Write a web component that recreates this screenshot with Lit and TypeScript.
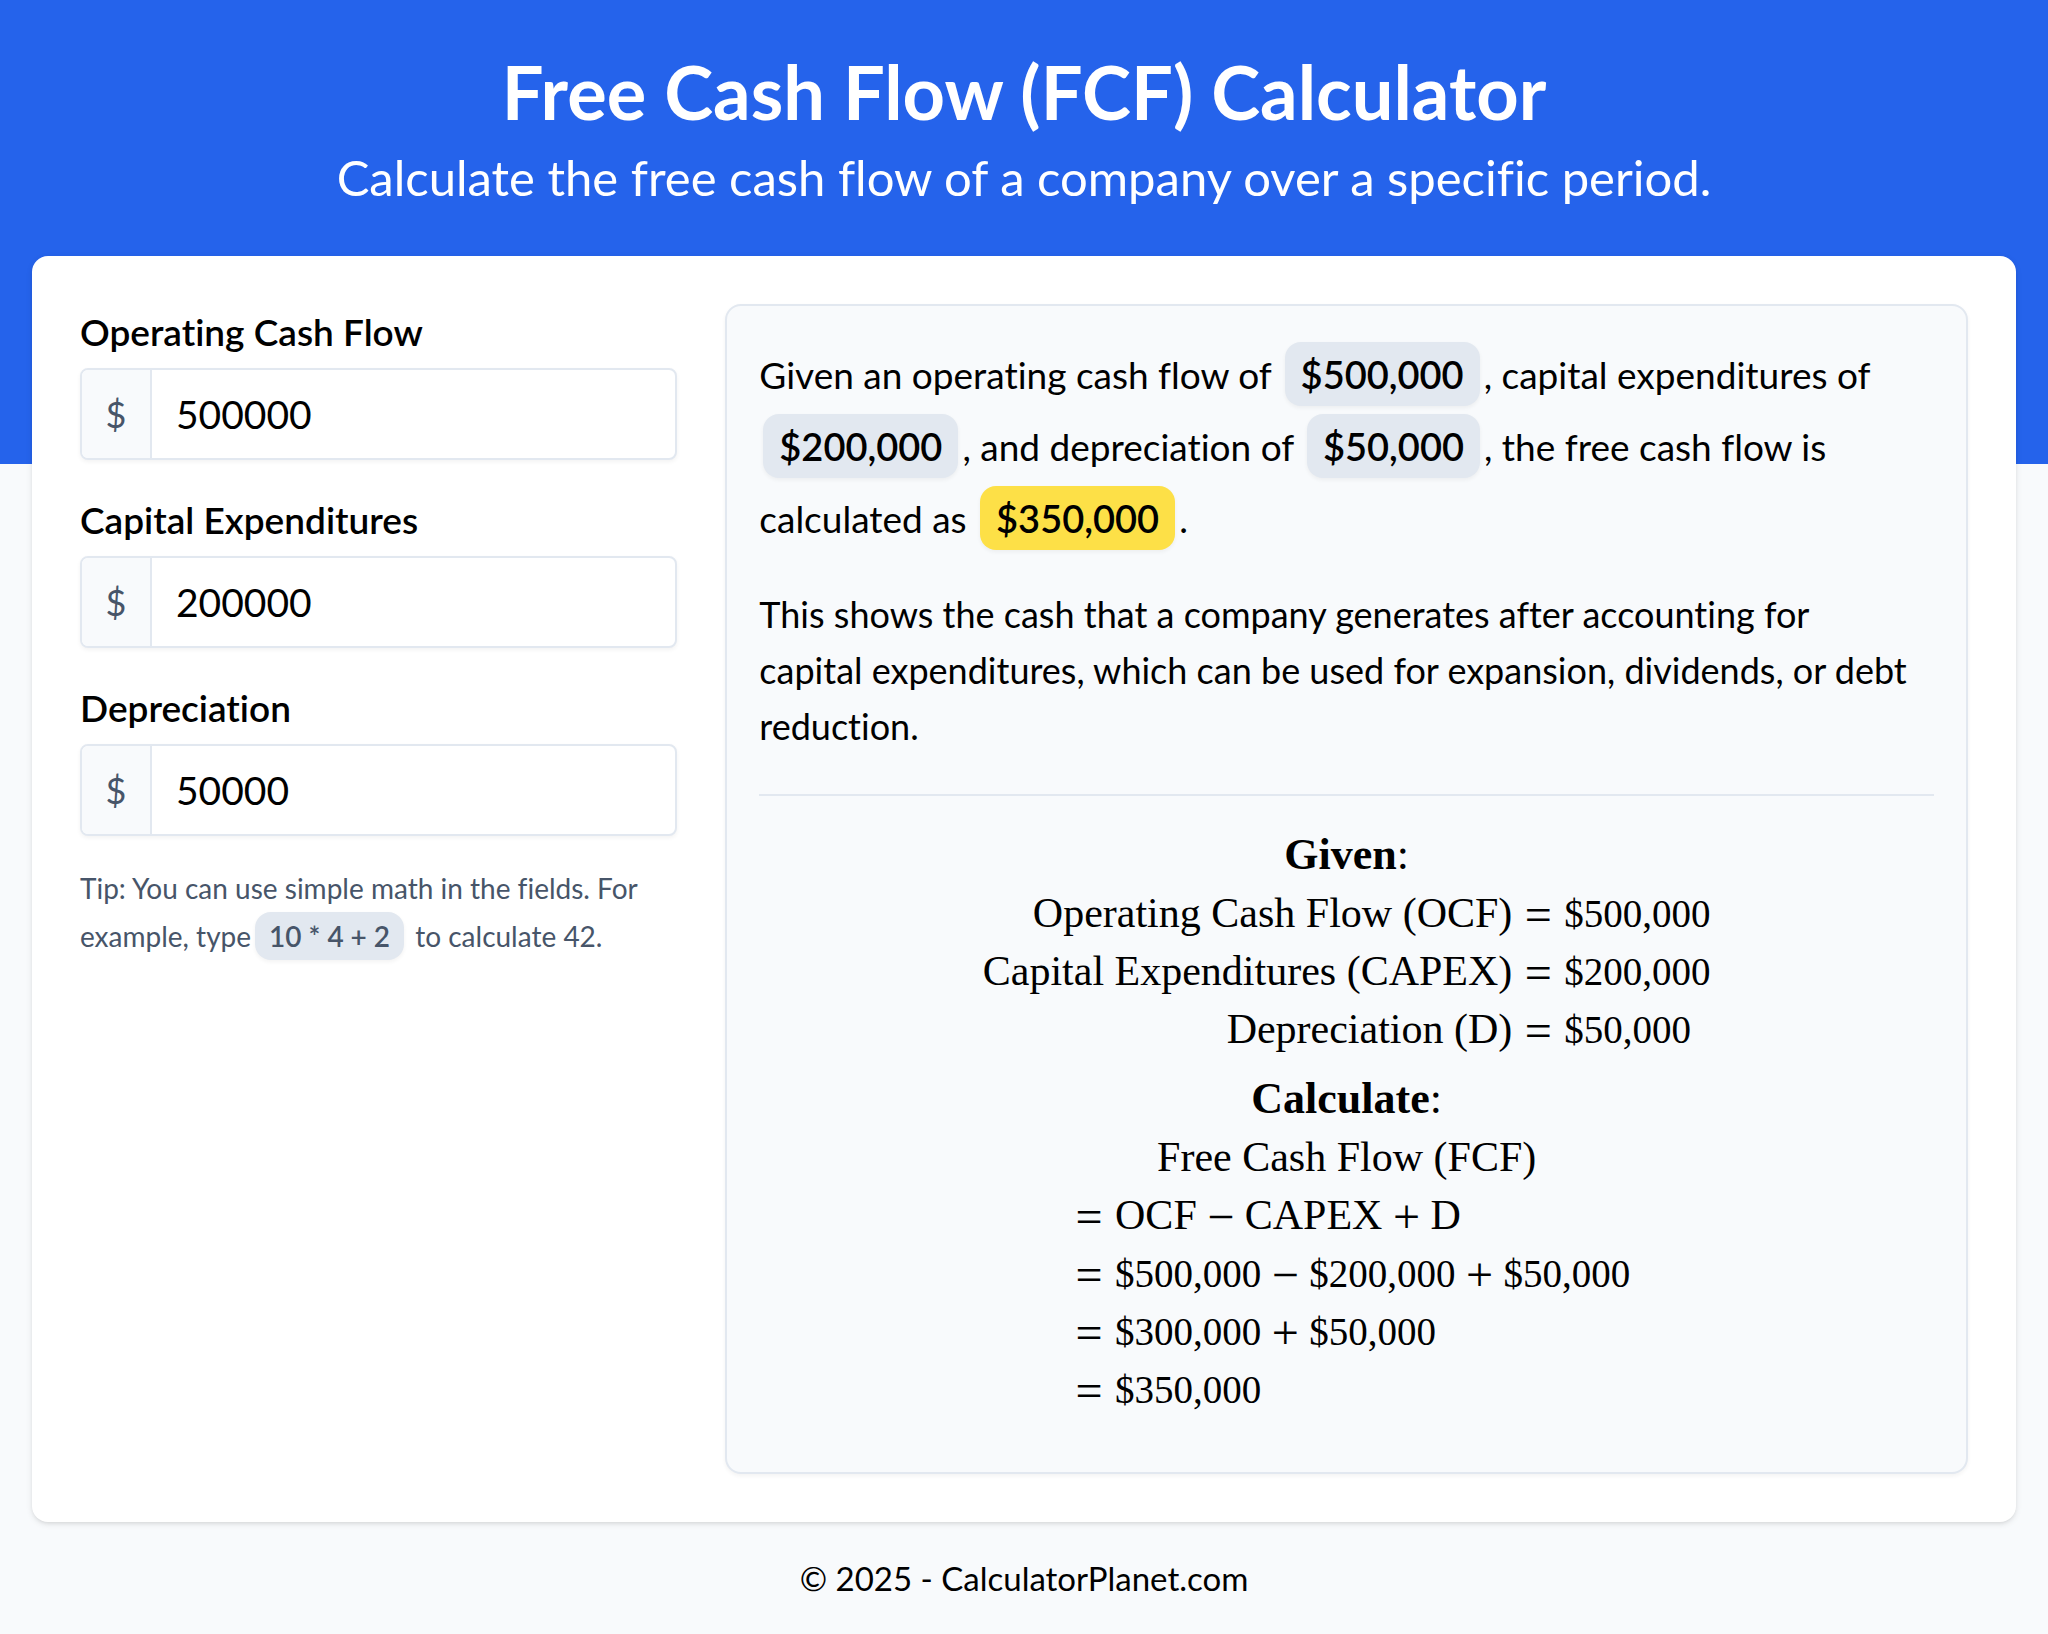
import { LitElement, html, css } from "lit";
import { customElement, state } from "lit/decorators.js";

type FieldKey = "ocf" | "capex" | "dep";

const FIELDS: { key: FieldKey; label: string }[] = [
  { key: "ocf", label: "Operating Cash Flow" },
  { key: "capex", label: "Capital Expenditures" },
  { key: "dep", label: "Depreciation" },
];

/** Evaluates a plain arithmetic expression with + - * / and parentheses. */
function evaluate(source: string): number {
  const tokens = source.replace(/[,$\s]/g, "").match(/\d+\.?\d*|\.\d+|[-+*/()]/g) ?? [];
  let at = 0;
  const factor = (): number => {
    const token = tokens[at++];
    if (token === "-") return -factor();
    if (token === "+") return factor();
    if (token === "(") {
      const inner = sum();
      at++;
      return inner;
    }
    return Number(token) || 0;
  };
  const product = (): number => {
    let value = factor();
    while (tokens[at] === "*" || tokens[at] === "/") {
      value = tokens[at++] === "*" ? value * factor() : value / factor();
    }
    return value;
  };
  const sum = (): number => {
    let value = product();
    while (tokens[at] === "+" || tokens[at] === "-") {
      value = tokens[at++] === "+" ? value + product() : value - product();
    }
    return value;
  };
  return sum();
}

function money(value: number): string {
  const text = Math.abs(value).toLocaleString("en-US", { maximumFractionDigits: 2 });
  return (value < 0 ? "-$" : "$") + text;
}

@customElement("app-root")
export class AppRoot extends LitElement {
  static styles = css`
    :host {
      display: block;
      min-height: 100vh;
      background: #f8fafc;
      color: #000;
      font-family: Lato, "Open Sans", sans-serif;
      font-size: 36px;
      line-height: 56px;
      font-variant-ligatures: none;
    }
    * {
      box-sizing: border-box;
    }
    .header {
      padding: 48px 32px 254px;
      background: #2563eb;
      color: #fff;
      text-align: center;
    }
    .title {
      margin: 0;
      font-size: 74px;
      line-height: 88px;
      font-weight: 700;
    }
    .subtitle {
      margin: 8px 0 0;
      font-size: 49px;
      line-height: 66px;
    }
    .card {
      display: grid;
      grid-template-columns: repeat(3, minmax(0, 1fr));
      gap: 48px;
      margin: -208px 32px 0;
      padding: 48px;
      border-radius: 16px;
      background: #fff;
      box-shadow: 0 2px 6px rgba(0, 0, 0, 0.1), 0 2px 4px -2px rgba(0, 0, 0, 0.1);
    }
    .field {
      margin-bottom: 32px;
    }
    .label {
      display: block;
      margin-bottom: 8px;
      font-size: 37px;
      font-weight: 600;
    }
    .control {
      display: flex;
      height: 92px;
      overflow: hidden;
      border: 2px solid #e2e8f0;
      border-radius: 8px;
      background: #fff;
      box-shadow: 0 2px 4px rgba(0, 0, 0, 0.05);
    }
    .control:focus-within {
      border-color: #2563eb;
    }
    .prefix {
      display: flex;
      flex: none;
      align-items: center;
      justify-content: center;
      width: 70px;
      border-right: 2px solid #e2e8f0;
      background: #f8fafc;
      color: #475569;
    }
    .input {
      flex: 1;
      min-width: 0;
      padding: 0 24px;
      border: 0;
      outline: 0;
      background: transparent;
      color: inherit;
      font: inherit;
      font-size: 39px;
    }
    .tip {
      margin: -4px 0 0;
      color: #475569;
      font-size: 28px;
      line-height: 48px;
    }
    .chip {
      display: inline-block;
      margin: 4px;
      padding: 4px 16px;
      border-radius: 16px;
      background: #e2e8f0;
      font-size: 38px;
      font-weight: 600;
      box-shadow: 0 2px 4px rgba(0, 0, 0, 0.05);
    }
    .chip-small {
      margin: 0 4px;
      padding: 0 14px;
      font-size: 28px;
    }
    .chip-result {
      background: #fde047;
    }
    .panel {
      grid-column: span 2;
      padding: 32px;
      border: 2px solid #e2e8f0;
      border-radius: 16px;
      background: #f8fafc;
      box-shadow: 0 2px 4px rgba(0, 0, 0, 0.05);
    }
    .summary,
    .note {
      margin: 0 0 32px;
    }
    .summary {
      font-size: 37px;
    }
    .rule {
      height: 2px;
      margin: 40px 0 30px;
      border: 0;
      background: #e2e8f0;
    }
    .math {
      display: flex;
      flex-direction: column;
      align-items: center;
      padding-bottom: 22px;
      font-family: "Liberation Serif", serif;
      font-size: 42px;
      line-height: 58px;
    }
    .heading {
      margin: 0;
      font-size: 44px;
      font-weight: 400;
    }
    .steps {
      margin-top: 12px;
    }
    .given {
      border-collapse: collapse;
    }
    .given th,
    .given td {
      height: 58px;
      padding: 0;
      font-weight: 400;
      text-align: left;
      vertical-align: baseline;
    }
    .given th {
      text-align: right;
    }
    .num {
      font-size: 39px;
      line-height: 40px;
    }
    .op {
      display: inline-block;
      width: 28px;
      margin: 0 12px;
      font-size: 48px;
      line-height: 40px;
      text-align: center;
      vertical-align: -4px;
    }
    .op-inner {
      margin: 0 10px;
    }
    .footer {
      padding: 32px;
      font-size: 33px;
      line-height: 48px;
      text-align: center;
    }
    @media (max-width: 1100px) {
      .fields,
      .panel {
        grid-column: 1 / -1;
      }
    }
  `;

  @state() private inputs: Record<FieldKey, string> = {
    ocf: "500000",
    capex: "200000",
    dep: "50000",
  };

  private setInput(key: FieldKey, event: Event) {
    this.inputs = { ...this.inputs, [key]: (event.target as HTMLInputElement).value };
  }

  private eq() {
    return html`<span class="op">=</span>`;
  }

  private op(sign: string) {
    return html`<span class="op op-inner">${sign}</span>`;
  }

  private num(value: number) {
    return html`<span class="num">${money(value)}</span>`;
  }

  render() {
    const ocf = evaluate(this.inputs.ocf);
    const capex = evaluate(this.inputs.capex);
    const dep = evaluate(this.inputs.dep);
    const result = ocf - capex + dep;
    const given: [string, number][] = [
      ["Operating Cash Flow (OCF)", ocf],
      ["Capital Expenditures (CAPEX)", capex],
      ["Depreciation (D)", dep],
    ];
    return html`
      <header class="header">
        <h1 class="title">Free Cash Flow (FCF) Calculator</h1>
        <p class="subtitle">Calculate the free cash flow of a company over a specific period.</p>
      </header>
      <main class="card">
        <form class="fields" @submit=${(e: Event) => e.preventDefault()}>
          ${FIELDS.map(
            (f) => html`<div class="field">
              <label class="label" for=${f.key}>${f.label}</label>
              <div class="control">
                <span class="prefix">$</span>
                <input
                  class="input"
                  id=${f.key}
                  type="text"
                  inputmode="decimal"
                  .value=${this.inputs[f.key]}
                  @input=${(e: Event) => this.setInput(f.key, e)}
                />
              </div>
            </div>`
          )}
          <p class="tip">
            Tip: You can use simple math in the fields. For example, type<span class="chip chip-small">10 * 4 + 2</span>
            to calculate 42.
          </p>
        </form>
        <section class="panel">
          <p class="summary">
            Given an operating cash flow of <span class="chip">${money(ocf)}</span>, capital expenditures of
            <span class="chip">${money(capex)}</span>, and depreciation of
            <span class="chip">${money(dep)}</span>, the free cash flow is calculated as
            <span class="chip chip-result">${money(result)}</span>.
          </p>
          <p class="note">
            This shows the cash that a company generates after accounting for<br />
            capital expenditures, which can be used for expansion, dividends, or debt reduction.
          </p>
          <hr class="rule" />
          <div class="math">
            <h2 class="heading"><b>Given</b>:</h2>
            <table class="given">
              ${given.map(
                ([name, value]) => html`<tr>
                  <th scope="row">${name}</th>
                  <td>${this.eq()}${this.num(value)}</td>
                </tr>`
              )}
            </table>
            <h2 class="heading steps"><b>Calculate</b>:</h2>
            <div>Free Cash Flow (FCF)</div>
            <div>
              <div>${this.eq()}OCF${this.op("−")}CAPEX${this.op("+")}D</div>
              <div>${this.eq()}${this.num(ocf)}${this.op("−")}${this.num(capex)}${this.op("+")}${this.num(dep)}</div>
              <div>${this.eq()}${this.num(ocf - capex)}${this.op("+")}${this.num(dep)}</div>
              <div>${this.eq()}${this.num(result)}</div>
            </div>
          </div>
        </section>
      </main>
      <footer class="footer">© 2025 - CalculatorPlanet.com</footer>
    `;
  }
}
